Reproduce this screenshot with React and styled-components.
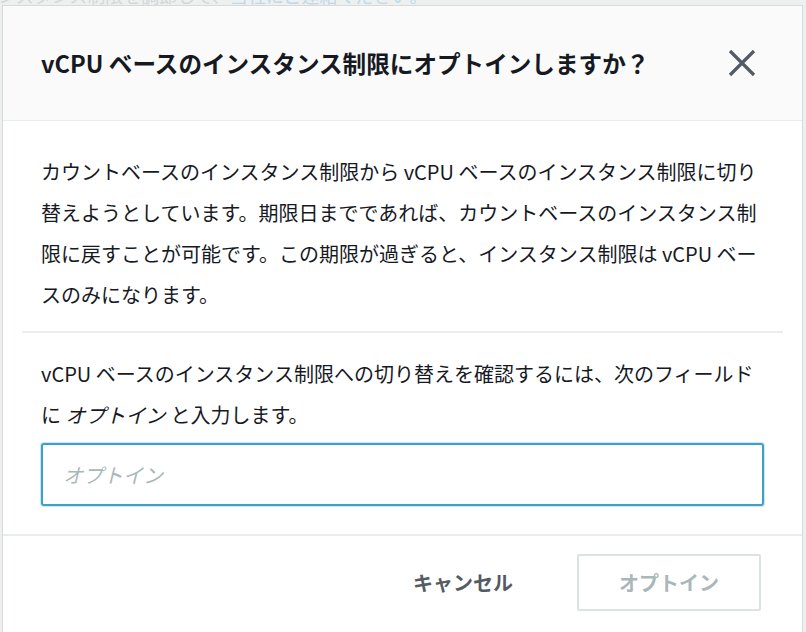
import React from 'react'
import styled, { createGlobalStyle } from 'styled-components'

const GlobalStyle = createGlobalStyle`
  html, body {
    margin: 0;
    padding: 0;
    height: 100%;
    overflow: hidden;
    background: #eef0f0;
  }
  body {
    font-family: "Noto Sans CJK JP", "Noto Sans", sans-serif;
    color: #16191f;
  }
  * {
    box-sizing: border-box;
  }
`

const Page = styled.div`
  height: 632px;
  display: flex;
  flex-direction: column;
  padding: 0 3px 0 2px;
  overflow: hidden;
`

const BackdropLine = styled.div`
  height: 5px;
  overflow: hidden;
  white-space: nowrap;
  margin-left: -4px;
  font-size: 18px;
  line-height: 18px;
  color: #d3d8d8;
`

const BackdropText = styled.div`
  margin-top: -14px;
`

const BackdropLink = styled.span`
  color: #bfdae7;
`

const Modal = styled.section`
  flex: 1;
  display: flex;
  flex-direction: column;
  background: #ffffff;
  border: 1px solid #d5dbdb;
  border-bottom: none;
`

const Header = styled.header`
  height: 115px;
  flex-shrink: 0;
  display: flex;
  align-items: center;
  justify-content: space-between;
  padding: 0 46px 0 38px;
  background: #fafafa;
  border-bottom: 1px solid #eaeded;
`

const Title = styled.h2`
  margin: 0;
  font-size: 23.6px;
  font-weight: 700;
  color: #16191f;
`

const CloseButton = styled.button`
  width: 28px;
  height: 28px;
  padding: 0;
  border: none;
  background: transparent;
  color: #545b64;
  display: flex;
  cursor: pointer;
`

const Body = styled.div`
  padding: 0 19px;
`

const Section = styled.div`
  padding: ${p => p.$top}px 19px 0 19px;
`

const Paragraph = styled.p`
  margin: 0;
  max-width: ${p => p.$max || '100%'};
  font-size: 20px;
  line-height: 41px;
  color: #16191f;
`

const Keyword = styled.em`
  font-style: italic;
  padding-right: 5px;
`

const Divider = styled.hr`
  margin: 16px 0 0 0;
  border: none;
  height: 2px;
  background: #eaeded;
`

const TextInput = styled.input`
  display: block;
  width: 100%;
  height: 63px;
  margin: 8px 0 28px 0;
  padding: 0 20px;
  border: 2px solid #3e9fc7;
  border-radius: 3px;
  box-shadow: 0 0 0 1px rgba(62, 159, 199, 0.25);
  outline: none;
  font-family: inherit;
  font-size: 20px;
  color: #16191f;
  &::placeholder {
    color: #aab7b8;
    font-style: italic;
  }
`

const Footer = styled.footer`
  display: flex;
  justify-content: flex-end;
  gap: 22px;
  padding: 18px 41px 0 0;
  border-top: 2px solid #eaeded;
`

const Button = styled.button`
  height: 57px;
  padding: 0 40px;
  font-family: inherit;
  font-size: 20px;
  font-weight: 700;
  border-radius: 2px;
  background: #ffffff;
  color: ${p => (p.$disabled ? '#aab7b8' : '#545b64')};
  border: ${p => (p.$disabled ? '2px solid #dde2e2' : '2px solid transparent')};
  cursor: ${p => (p.$disabled ? 'default' : 'pointer')};
`

const CloseIcon = () => (
  <svg width="28" height="28" viewBox="0 0 28 28" fill="none">
    <path d="M2 2 L26 26 M26 2 L2 26" stroke="currentColor" strokeWidth="3.2" />
  </svg>
)

const App = () => {
  return (
    <>
      <GlobalStyle />
      <Page>
        <BackdropLine>
          <BackdropText>
            ンスタンス制限を調節して、<BackdropLink>当社にご連絡ください。</BackdropLink>
          </BackdropText>
        </BackdropLine>
        <Modal>
          <Header>
            <Title>vCPU ベースのインスタンス制限にオプトインしますか？</Title>
            <CloseButton aria-label="閉じる">
              <CloseIcon />
            </CloseButton>
          </Header>
          <Body>
            <Section $top={30}>
              <Paragraph $max="717px">
                カウントベースのインスタンス制限から vCPU ベースのインスタンス制限に切り替えようとしています。期限日までであれば、カウントベースのインスタンス制限に戻すことが可能です。この期限が過ぎると、インスタンス制限は vCPU ベースのみになります。
              </Paragraph>
            </Section>
            <Divider />
            <Section $top={20}>
              <Paragraph>
                vCPU ベースのインスタンス制限への切り替えを確認するには、次のフィールドに <Keyword>オプトイン</Keyword>と入力します。
              </Paragraph>
              <TextInput placeholder="オプトイン" />
            </Section>
          </Body>
          <Footer>
            <Button>キャンセル</Button>
            <Button $disabled>オプトイン</Button>
          </Footer>
        </Modal>
      </Page>
    </>
  )
}

export default App
